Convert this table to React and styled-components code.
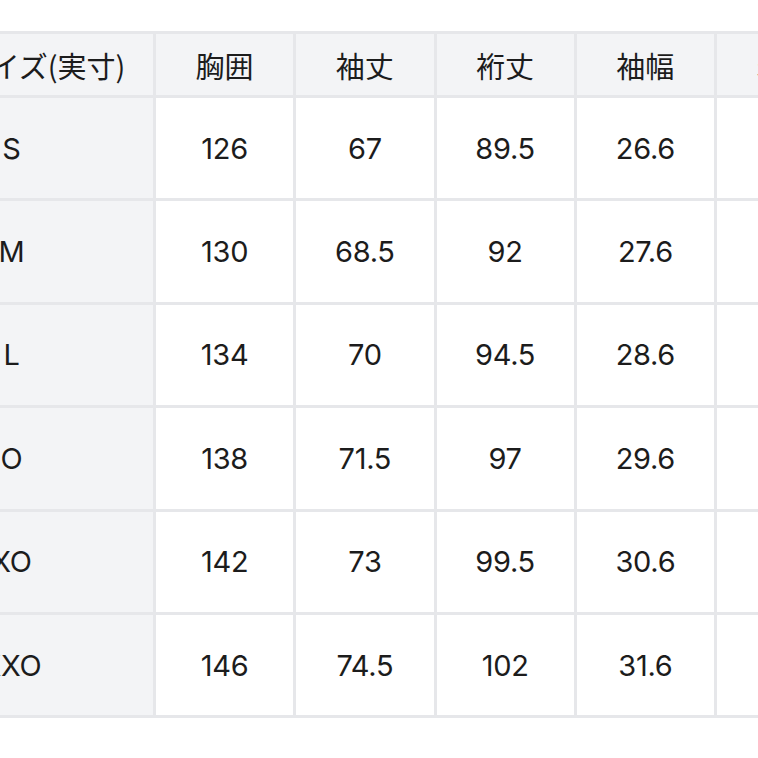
import React from "react";
import styled, { createGlobalStyle } from "styled-components";

const Global = createGlobalStyle`
  html, body { margin: 0; padding: 0; background: #ffffff; overflow: hidden; }
  body { width: 758px; height: 758px; }
`;

const Page = styled.div`
  width: 758px;
  height: 758px;
  overflow: hidden;
  background: #ffffff;
  padding-top: 31px;
  box-sizing: border-box;
`;

const Table = styled.div`
  display: grid;
  grid-template-columns: 225px repeat(5, 137.25px);
  grid-template-rows: 61px repeat(6, 100.4px);
  gap: 3px;
  padding: 3px;
  margin-left: -75px;
  width: max-content;
  background: #e6e7ea;
`;

const Cell = styled.div`
  display: flex;
  align-items: center;
  justify-content: center;
  background: ${(p) => (p.$shade ? "#f3f4f6" : "#ffffff")};
  color: #1c1c1c;
  font-family: ${(p) =>
    p.$head
      ? '"Noto Sans CJK JP", "Noto Sans", sans-serif'
      : '"Inter", "Noto Sans", sans-serif'};
  font-size: ${(p) => (p.$head ? "29px" : "29px")};
  font-weight: 400;
  letter-spacing: ${(p) => (p.$head ? "0" : "-0.3px")};
  padding-left: ${(p) => (p.$headLabel ? "6px" : "0")};
  padding-right: ${(p) => (p.$label ? "58px" : "0")};
  white-space: nowrap;
  overflow: hidden;
`;

const headers = ["サイズ(実寸)", "胸囲", "袖丈", "裄丈", "袖幅", "着丈"];
const rows = [
  ["S", "126", "67", "89.5", "26.6", "70"],
  ["M", "130", "68.5", "92", "27.6", "72"],
  ["L", "134", "70", "94.5", "28.6", "74"],
  ["O", "138", "71.5", "97", "29.6", "76"],
  ["XO", "142", "73", "99.5", "30.6", "78"],
  ["XXO", "146", "74.5", "102", "31.6", "80"],
];

export default function App() {
  return (
    <>
      <Global />
      <Page>
        <Table>
          {headers.map((h, i) => (
            <Cell key={h} $head $shade $headLabel={i === 0}>
              {h}
            </Cell>
          ))}
          {rows.map((r) =>
            r.map((v, i) => (
              <Cell key={r[0] + i} $shade={i === 0} $label={i === 0}>
                {v}
              </Cell>
            ))
          )}
        </Table>
      </Page>
    </>
  );
}
